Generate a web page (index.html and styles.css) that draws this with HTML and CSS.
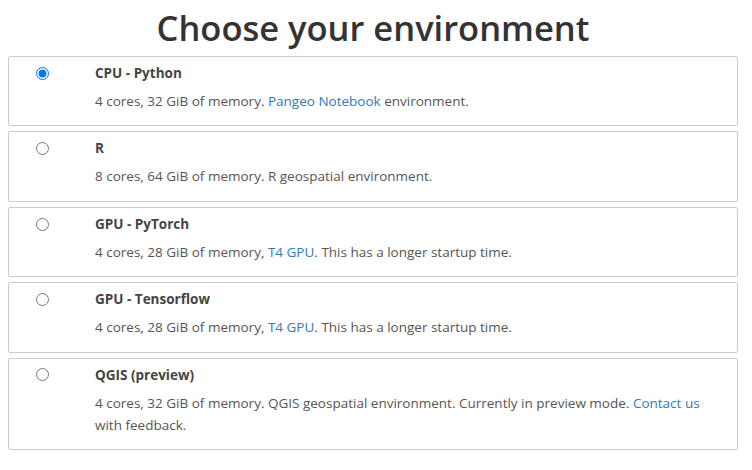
FILE: index.html
```html
<!DOCTYPE html>
<html>
<head>
<meta charset="utf-8">
<link rel="stylesheet" href="styles.css">
</head>
<body>
<div class="page">
  <h1 class="title">Choose your environment</h1>
  <div class="options">
    <label class="card">
      <span class="radio-cell"><input class="radio" type="radio" name="env" checked></span>
      <span class="name">CPU - Python</span>
      <span class="desc">4 cores, 32 GiB of memory. <a class="link" href="#">Pangeo Notebook</a> environment.</span>
    </label>
    <label class="card">
      <span class="radio-cell"><input class="radio" type="radio" name="env"></span>
      <span class="name">R</span>
      <span class="desc">8 cores, 64 GiB of memory. R geospatial environment.</span>
    </label>
    <label class="card">
      <span class="radio-cell"><input class="radio" type="radio" name="env"></span>
      <span class="name">GPU - PyTorch</span>
      <span class="desc">4 cores, 28 GiB of memory, <a class="link" href="#">T4 GPU</a>. This has a longer startup time.</span>
    </label>
    <label class="card">
      <span class="radio-cell"><input class="radio" type="radio" name="env"></span>
      <span class="name">GPU - Tensorflow</span>
      <span class="desc">4 cores, 28 GiB of memory, <a class="link" href="#">T4 GPU</a>. This has a longer startup time.</span>
    </label>
    <label class="card">
      <span class="radio-cell"><input class="radio" type="radio" name="env"></span>
      <span class="name">QGIS (preview)</span>
      <span class="desc">4 cores, 32 GiB of memory. QGIS geospatial environment. Currently in preview mode. <a class="link" href="#">Contact us</a> with feedback.</span>
    </label>
  </div>
</div>
</body>
</html>
```
FILE: styles.css
```css
html, body {
  margin: 0;
  padding: 0;
  background: #fff;
}
body {
  font-family: "Open Sans", "Noto Sans", sans-serif;
  color: #555;
  font-size: 13.5px;
}
.page {
  padding: 0 14px 0 8px;
}
.title {
  margin: 0;
  padding-top: 6px;
  height: 56px;
  box-sizing: border-box;
  text-align: center;
  font-size: 34.5px;
  font-weight: 600;
  line-height: 44px;
  color: #333;
}
.options {
  display: flex;
  flex-direction: column;
  gap: 5px;
}
.card {
  display: grid;
  grid-template-columns: 66px 1fr;
  column-gap: 20px;
  row-gap: 5.6px;
  border: 1px solid #ccc;
  border-radius: 2px;
  padding: 5px 28px 13px 0;
  line-height: 22.4px;
  cursor: pointer;
}
.radio-cell {
  grid-row: 1;
  grid-column: 1;
  display: flex;
  align-items: center;
  justify-content: center;
}
.radio {
  margin: 0;
  width: 13px;
  height: 13px;
}
.name {
  grid-row: 1;
  grid-column: 2;
  font-weight: 700;
  color: #444;
}
.desc {
  grid-row: 2;
  grid-column: 2;
}
.link {
  color: #337ab7;
  text-decoration: none;
}
```
